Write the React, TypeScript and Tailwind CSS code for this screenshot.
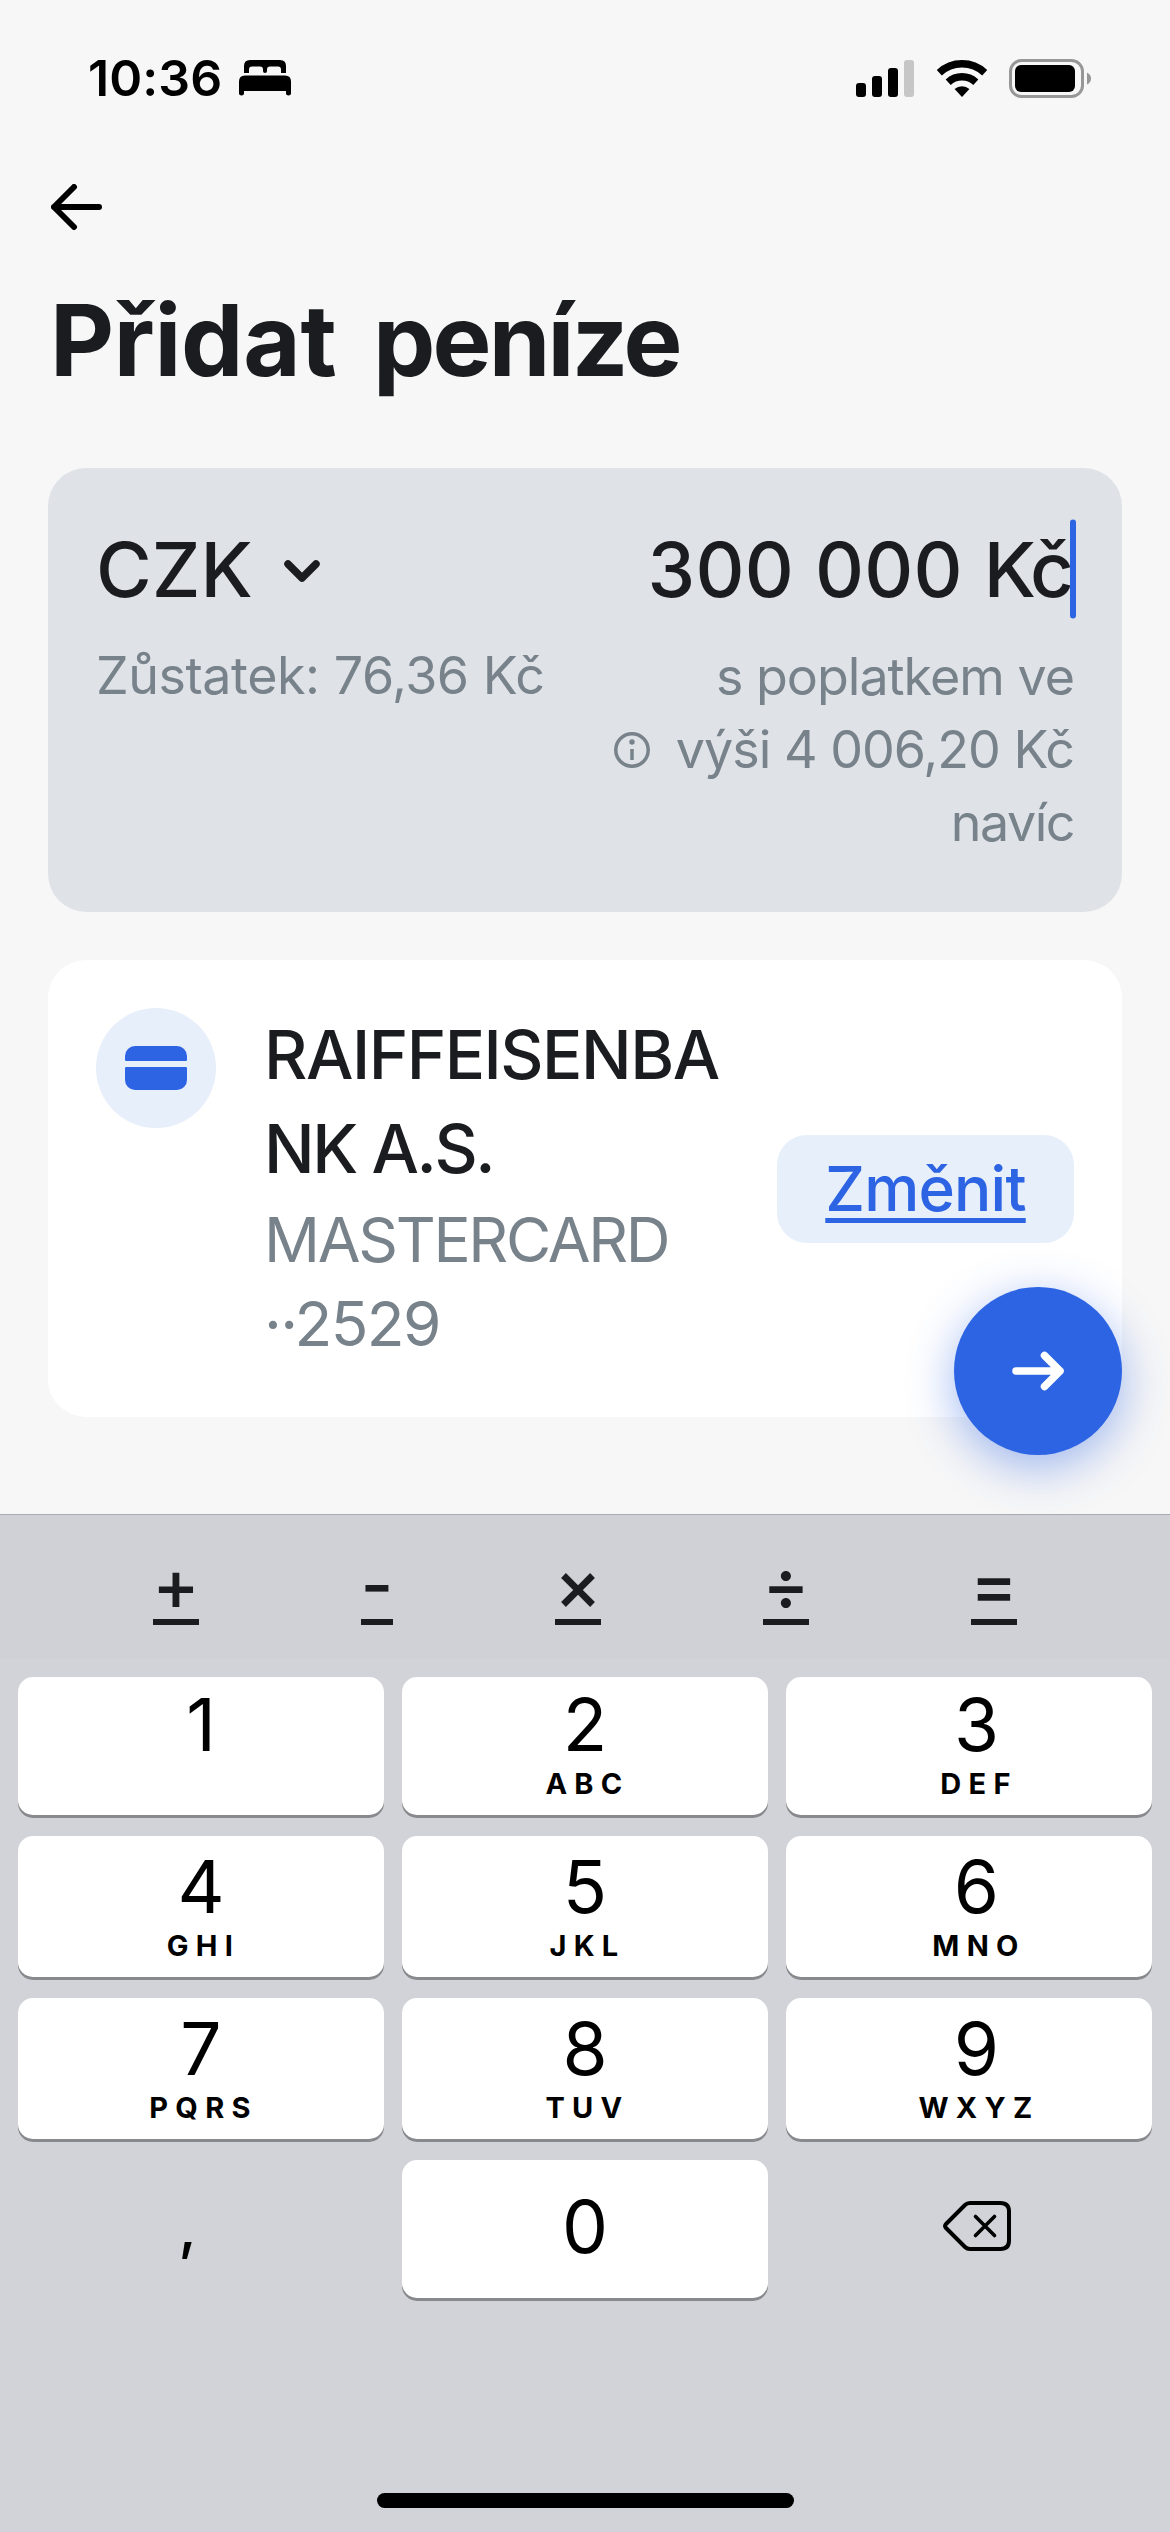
import type { ReactNode } from "react";

function BedIcon() {
  return (
    <svg width="52" height="36" viewBox="0 0 52 36" fill="#000">
      <path d="M5 13V6q0-6 6-6h30q6 0 6 6v7h-5V9.500q0-3-3-3h-8q-3 0-3 3V11q0 2-2 2t-2-2V9.500q0-3-3-3h-8q-3 0-3 3V13z" />
      <path d="M0 33.500V21.500q0-6 6-6h40q6 0 6 6v12q0 2-2.500 2t-2.500-2V31H5v2.500q0 2-2.500 2T0 33.500z" />
    </svg>
  );
}

function SignalIcon() {
  return (
    <svg width="58" height="37" viewBox="0 0 58 37" fill="#000">
      <rect x="0" y="23" width="10" height="14" rx="3" />
      <rect x="16" y="16" width="10" height="21" rx="3" />
      <rect x="32" y="8" width="10" height="29" rx="3" />
      <rect x="48" y="0" width="10" height="37" rx="3" fill="#c6c6c6" />
    </svg>
  );
}

function WifiIcon() {
  return (
    <svg width="52" height="37" viewBox="0 0 52 37" fill="none" stroke="#000" strokeWidth="7.400">
      <path d="M3.300 12.700A33.300 33.300 0 0 1 48.700 12.700" />
      <path d="M12.200 22.200A20.300 20.300 0 0 1 39.800 22.200" />
      <path d="M26 37L18.600 28.900A11.300 11.300 0 0 1 33.400 28.900Z" fill="#000" stroke="none" />
    </svg>
  );
}

function BatteryIcon() {
  return (
    <svg width="82" height="39" viewBox="0 0 82 39">
      <rect x="1.500" y="1.500" width="72" height="36" rx="11" fill="none" stroke="#979797" strokeWidth="3" />
      <rect x="6" y="6" width="60" height="27" rx="6" fill="#000" />
      <path d="M78 13.500q4 2 4 6t-4 6z" fill="#979797" />
    </svg>
  );
}

function StatusBar() {
  return (
    <header className="flex h-[156px] items-center justify-between pl-[88px] pr-[79px]">
      <div className="flex items-center">
        <span className="w-[151px] text-[50px] font-semibold leading-none tracking-[0.1px] text-black">10:36</span>
        <BedIcon />
      </div>
      <div className="flex items-center">
        <SignalIcon />
        <div className="ml-[22px] mr-[21px]">
          <WifiIcon />
        </div>
        <BatteryIcon />
      </div>
    </header>
  );
}

function AmountCard() {
  return (
    <section className="mx-12 mt-[46px] h-[444px] rounded-[38px] bg-[#dfe2e7] px-12 pt-[51px]">
      <div className="flex h-[99px] items-center justify-between">
        <div className="flex items-center">
          <span className="text-[76px] font-medium leading-none text-[#1b1c20]">CZK</span>
          <svg className="ml-[31px] mt-1" width="36" height="22" viewBox="0 0 36 22" fill="none" stroke="#1b1c20" strokeWidth="7.500" strokeLinecap="round" strokeLinejoin="round">
            <path d="M4 4L18 18L32 4" />
          </svg>
        </div>
        <div className="relative">
          <span className="text-[76px] font-medium leading-none tracking-[0.2px] text-[#1b1c20] [word-spacing:0.5px]">
            300 000 <span className="tracking-[-6px]">K</span>č
          </span>
          <span className="absolute -right-[2px] top-1/2 h-[99px] w-[6px] -translate-y-1/2 rounded-full bg-[#2c64e3]" />
        </div>
      </div>
      <div className="mt-[21px] flex justify-between text-[52px] leading-[73px] text-[#78828b]">
        <p className="tracking-[-0.45px]">Zůstatek: 76,36 Kč</p>
        <div className="mt-px flex items-center">
          <svg className="mr-[26px]" width="36" height="36" viewBox="0 0 36 36" fill="none" stroke="#78828b" strokeWidth="3.500">
            <circle cx="18" cy="18" r="16.200" />
            <path d="M18 17v11" />
            <circle cx="18" cy="10" r="2.700" fill="#78828b" stroke="none" />
          </svg>
          <p className="text-right tracking-[-1px]">
            s poplatkem ve
            <br />
            výši 4 006,20 Kč
            <br />
            <span className="tracking-[-1.5px]">navíc</span>
          </p>
        </div>
      </div>
    </section>
  );
}

function SourceCard() {
  return (
    <section className="relative mx-12 mt-12 flex h-[457px] rounded-[38px] bg-white px-12 pt-12">
      <div className="flex h-[120px] w-[120px] items-center justify-center rounded-full bg-[#e7effb]">
        <div className="flex w-[62px] flex-col gap-[6px]">
          <div className="h-[15px] rounded-t-[10px] rounded-b-[1px] bg-[#2c64e3]" />
          <div className="h-[23px] rounded-b-[10px] rounded-t-[1px] bg-[#2c64e3]" />
        </div>
      </div>
      <div className="ml-12 whitespace-nowrap">
        <div className="text-[67px] font-medium leading-[94px] tracking-[-1.5px] text-[#1b1c20]">
          RAIFFEISENBA
          <br />
          <span className="tracking-[-2.4px]">NK A.S.</span>
        </div>
        <div className="mt-[2px] text-[62px] leading-[84px] text-[#78828b]">
          <span className="tracking-[-2.3px]">MASTERCARD</span>
          <br />
          <span className="tracking-[-1.6px]">··2529</span>
        </div>
      </div>
      <div className="mt-[127px] ml-auto flex h-[108px] w-[297px] items-center justify-center rounded-[30px] bg-[#e7effb]">
        <span className="text-[62px] font-medium leading-none tracking-[-0.8px] text-[#2c64e3] underline decoration-[5px] underline-offset-[7px] [text-decoration-skip-ink:none]">
          Změnit
        </span>
      </div>
      <div className="absolute right-0 top-[327px] flex h-[168px] w-[168px] items-center justify-center rounded-full bg-[#2c64e3] shadow-[0_12px_48px_rgba(44,100,227,0.45)]">
        <svg width="52" height="40" viewBox="0 0 52 40" fill="none" stroke="#fff" strokeWidth="7.500" strokeLinecap="round" strokeLinejoin="round">
          <path d="M4 20H48M32.500 4.500L48 20L32.500 35.500" />
        </svg>
      </div>
    </section>
  );
}

function Operator({ children, width }: { children: ReactNode; width: string }) {
  return (
    <div className={`flex h-[66px] flex-col items-center border-b-[6px] border-[#1b1c20] text-[71px] font-medium leading-[51px] text-[#1b1c20] ${width}`}>
      {children}
    </div>
  );
}

function Key({ digit, letters, shifted }: { digit: string; letters?: string; shifted?: boolean }) {
  return (
    <div className={`flex flex-col items-center rounded-[15px] bg-white text-black shadow-[0_3px_0_#88898d] ${shifted ? "pl-[15px]" : ""}`}>
      <span className="mt-auto text-[73px] leading-[53px]">{digit}</span>
      <span className="mt-[22px] mb-[21px] h-[21px] pl-[5px] text-[29px] font-bold leading-[21px] tracking-[7.3px]">{letters}</span>
    </div>
  );
}

function Keyboard() {
  return (
    <section className="flex flex-1 flex-col border-t border-[#a9abae] bg-[#d2d3d8]">
      <div className="flex h-[144px] items-start justify-between bg-[#d0d1d6] px-[153px] pt-[44px]">
        <Operator width="w-[46px]">+</Operator>
        <Operator width="w-[32px]">-</Operator>
        <Operator width="w-[46px]">×</Operator>
        <Operator width="w-[46px]">÷</Operator>
        <Operator width="w-[46px]">=</Operator>
      </div>
      <div className="mt-[18px] grid grid-cols-3 grid-rows-[138px_141px_141px_138px] gap-x-[18px] gap-y-[21px] px-[18px]">
        <Key digit="1" />
        <Key digit="2" letters="ABC" />
        <Key digit="3" letters="DEF" shifted />
        <Key digit="4" letters="GHI" />
        <Key digit="5" letters="JKL" />
        <Key digit="6" letters="MNO" shifted />
        <Key digit="7" letters="PQRS" />
        <Key digit="8" letters="TUV" />
        <Key digit="9" letters="WXYZ" shifted />
        <div className="flex items-center justify-center pr-[27px] pb-[7px] text-[60px] font-medium leading-none text-black">,</div>
        <div className="flex items-center justify-center rounded-[15px] bg-white pb-[6px] text-[73px] leading-none text-black shadow-[0_3px_0_#88898d]">0</div>
        <div className="flex items-center justify-center pb-[6px]">
          <svg className="ml-[16px]" width="68" height="50" viewBox="0 0 68 50" fill="none" stroke="#000" strokeWidth="4" strokeLinecap="round" strokeLinejoin="round">
            <path d="M27 2H57.500Q66 2 66 10.500V39.500Q66 48 57.500 48H27Q24 48 22 46L3 27Q1 25 3 23L22 4Q24 2 27 2Z" />
            <path d="M32.500 15.500L51.500 34.500M51.500 15.500L32.500 34.500" strokeWidth="3.600" />
          </svg>
        </div>
      </div>
      <div className="mx-auto mt-auto mb-6 h-[15px] w-[417px] rounded-full bg-black" />
    </section>
  );
}

export default function App() {
  return (
    <main className="flex h-[2532px] w-[1170px] flex-col overflow-hidden bg-[#f7f7f7] font-['Inter',sans-serif]">
      <StatusBar />
      <nav className="flex h-[102px] items-center pl-[51px]">
        <svg width="51" height="46" viewBox="0 0 51 46" fill="none" stroke="#000" strokeWidth="6" strokeLinecap="round" strokeLinejoin="round">
          <path d="M48 23H3M23 3L3 23L23 43" />
        </svg>
      </nav>
      <h1 className="h-[164px] pl-[50px] text-[99px] font-bold leading-[164px] tracking-[-2.8px] text-[#1b1c20] [word-spacing:16px]">
        <span className="tracking-[-0.3px]">Přidat</span> peníze
      </h1>
      <AmountCard />
      <SourceCard />
      <div className="h-[97px]" />
      <Keyboard />
    </main>
  );
}
